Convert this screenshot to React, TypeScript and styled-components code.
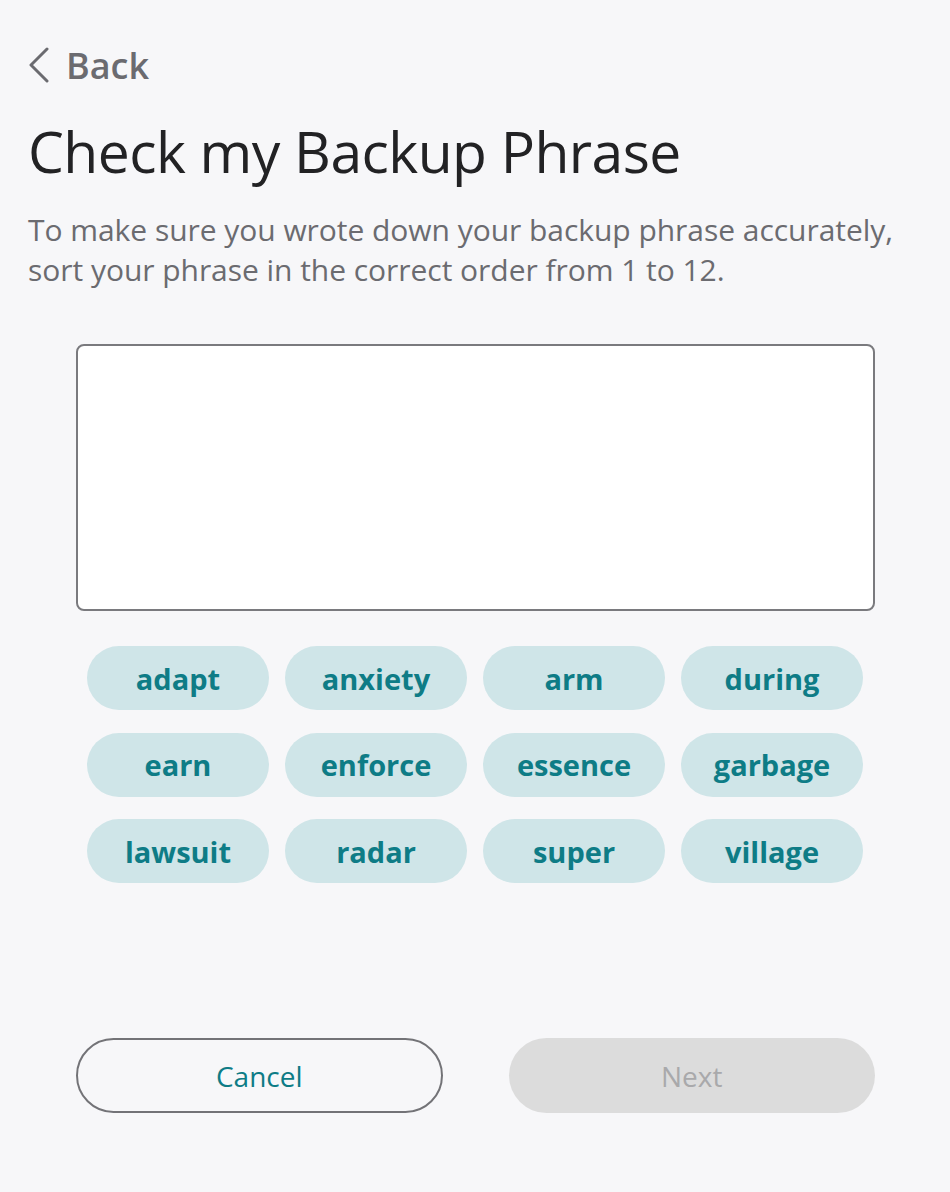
import React from "react";
import styled, { createGlobalStyle } from "styled-components";

const GlobalStyle = createGlobalStyle`
  html, body {
    margin: 0;
    padding: 0;
    background: #f7f7f9;
  }
  body {
    font-family: "Open Sans", "Liberation Sans", sans-serif;
  }
  * { box-sizing: border-box; }
`;

const Page = styled.div`
  width: 950px;
  min-height: 1192px;
  padding: 42px 28px 0 28px;
  display: flex;
  flex-direction: column;
`;

const BackLink = styled.button`
  display: flex;
  align-items: center;
  gap: 16px;
  background: none;
  border: none;
  padding: 0;
  cursor: pointer;
  color: #6b6b70;
  font-family: inherit;
  font-size: 36px;
  font-weight: 600;
  height: 46px;
  align-self: flex-start;
`;

const Title = styled.h1`
  margin: 25px 0 0 0;
  font-size: 57px;
  font-weight: 400;
  color: #222224;
  line-height: 76px;
  letter-spacing: -0.55px;
`;

const Description = styled.p`
  margin: 21px 0 0 0;
  font-size: 30px;
  line-height: 40px;
  color: #6b6b70;
  letter-spacing: -0.04px;
`;

const PhraseBox = styled.div`
  margin: 54px 47px 0 48px;
  height: 267px;
  background: #ffffff;
  border: 2px solid #7a7a7e;
  border-radius: 8px;
`;

const WordGrid = styled.div`
  margin: 35px 59px 0 59px;
  display: grid;
  grid-template-columns: repeat(4, 182px);
  column-gap: 16px;
  row-gap: 22.5px;
`;

const WordChip = styled.button`
  height: 64px;
  border: none;
  border-radius: 32px;
  background: #cfe5e8;
  color: #0e7c86;
  font-family: inherit;
  font-size: 29px;
  font-weight: 700;
  cursor: pointer;
  padding: 0;
`;

const Footer = styled.div`
  margin: 155px 47px 0 48px;
  display: grid;
  grid-template-columns: 1fr 1fr;
  column-gap: 66px;
`;

const PillButton = styled.button<{ $variant: "outline" | "disabled" }>`
  height: 75px;
  border-radius: 38px;
  font-family: inherit;
  font-size: 28px;
  font-weight: 500;
  padding: 0;
  cursor: ${(p) => (p.$variant === "disabled" ? "default" : "pointer")};
  border: ${(p) => (p.$variant === "outline" ? "2px solid #737377" : "none")};
  background: ${(p) => (p.$variant === "outline" ? "transparent" : "#dcdcdc")};
  color: ${(p) => (p.$variant === "outline" ? "#0e7c86" : "#a9a9ab")};
`;

const words = [
  "adapt",
  "anxiety",
  "arm",
  "during",
  "earn",
  "enforce",
  "essence",
  "garbage",
  "lawsuit",
  "radar",
  "super",
  "village",
];

const ChevronLeft = () => (
  <svg width="22" height="36" viewBox="0 0 22 36" fill="none">
    <path
      d="M19 2 L3 18 L19 34"
      stroke="#6b6b70"
      strokeWidth="3"
      strokeLinecap="round"
      strokeLinejoin="round"
    />
  </svg>
);

export default function App() {
  return (
    <>
      <GlobalStyle />
      <Page>
        <BackLink>
          <ChevronLeft />
          Back
        </BackLink>
        <Title>Check my Backup Phrase</Title>
        <Description>
          To make sure you wrote down your backup phrase accurately,
          <br />
          sort your phrase in the correct order from 1 to 12.
        </Description>
        <PhraseBox />
        <WordGrid>
          {words.map((w) => (
            <WordChip key={w}>{w}</WordChip>
          ))}
        </WordGrid>
        <Footer>
          <PillButton $variant="outline">Cancel</PillButton>
          <PillButton $variant="disabled" disabled>
            Next
          </PillButton>
        </Footer>
      </Page>
    </>
  );
}
